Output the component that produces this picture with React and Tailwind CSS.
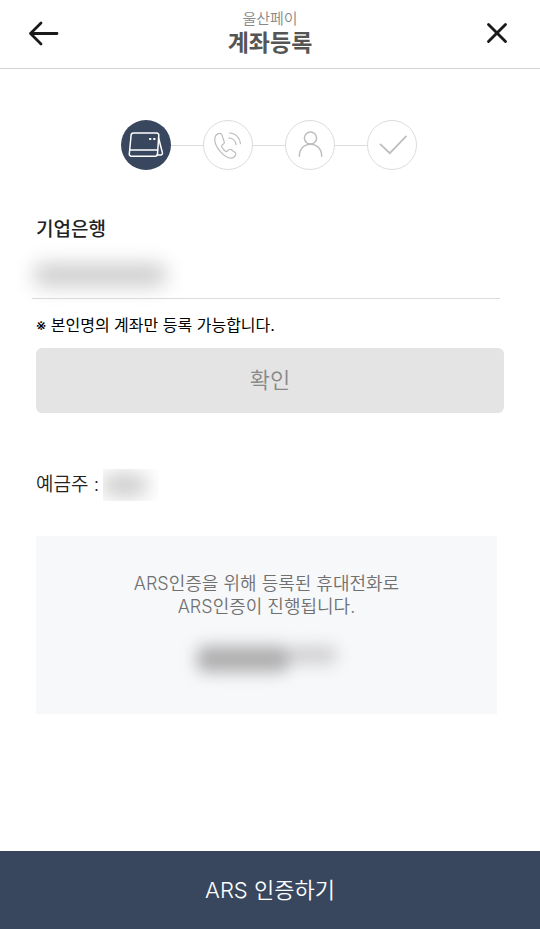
import { X } from "lucide-react";

function CardIcon() {
  return (
    <svg viewBox="0 0 36 28" className="w-9 h-7" fill="none" stroke="currentColor" strokeWidth="1.5" strokeLinecap="round" strokeLinejoin="round">
      <path d="M5.5 2h23.3a2 2 0 0 1 2 2.200l-1.300 18.800a2.400 2.400 0 0 1-2.400 2.200H3.300a2 2 0 0 1-2-2.200L3.100 4.200A2.400 2.400 0 0 1 5.500 2Z" />
      <path d="M1.800 19h27.800" />
      <path d="M30.600 7l3.800 14.800a1.700 1.700 0 0 1-1.600 2.200h-4" />
      <path d="M21.900 7.900h.6M26 7.900h.6" strokeWidth="2" />
    </svg>
  );
}

function CallIcon() {
  return (
    <svg viewBox="0 0 30 30" className="w-[30px] h-[30px]" fill="none" stroke="currentColor" strokeWidth="1.2" strokeLinecap="round" strokeLinejoin="round">
      <path d="M6.200 3.400c-2.200.6-4.200 2.700-4.400 5.400-.3 4 2.200 9 5.600 12.800 3.200 3.600 7.200 6.400 10.600 6.600 2.200.1 3.900-1.600 4.700-3.400.4-1 .1-1.700-.6-2.200l-4.100-3c-.8-.5-1.600-.4-2.300.2l-1.300 1.300c-.6.6-1.400.5-2.100 0-1.500-1.100-2.600-2.500-3.500-4.100-.4-.8-.3-1.500.4-2l1.500-1.200c.7-.6.9-1.300.5-2.100L8.800 4.600c-.5-1-1.400-1.500-2.600-1.200Z" />
      <path d="M16.500 3c5.800.1 10.600 4.800 11 10.600" />
      <path d="M15.900 7.800c3.800.3 6.800 3.200 7.200 7" />
    </svg>
  );
}

function PersonIcon() {
  return (
    <svg viewBox="0 0 30 30" className="w-[30px] h-[30px]" fill="none" stroke="currentColor" strokeWidth="1.5" strokeLinecap="round">
      <circle cx="15.500" cy="8" r="6.100" />
      <path d="M4.300 26.200c0-7 4.700-12 11.200-12s11.200 5 11.200 12" />
    </svg>
  );
}

function CheckIcon() {
  return (
    <svg viewBox="0 0 30 30" className="w-[30px] h-[30px]" fill="none" stroke="currentColor" strokeWidth="1.7" strokeLinecap="round">
      <path d="M3.500 14.400l9.300 8.800L29 6.400" />
    </svg>
  );
}

const STEPS = [
  { label: "계좌", icon: CardIcon, active: true },
  { label: "전화", icon: CallIcon },
  { label: "본인", icon: PersonIcon },
  { label: "완료", icon: CheckIcon },
];

export default function App() {
  return (
    <div className="min-h-screen flex flex-col bg-white font-['Inter','Noto_Sans_CJK_KR',sans-serif] font-[350] text-[#222]">
      {/* Header */}
      <header className="flex items-center justify-between h-[69px] px-[26px] pb-0.5 border-b border-[#d2d2d2]">
        <button type="button" aria-label="뒤로" className="text-[#1a1a1a]">
          <svg viewBox="0 0 34 34" className="w-[34px] h-[34px]" fill="none" stroke="currentColor" strokeWidth="2.800" strokeLinecap="round" strokeLinejoin="round">
            <path d="M31 17.500H4.500M15 7L4.500 17.500 15 28" />
          </svg>
        </button>
        <div className="text-center">
          <p className="text-[15px] leading-5 text-[#888]">울산페이</p>
          <h1 className="text-[23px] leading-7 font-bold text-[#555]">계좌등록</h1>
        </div>
        <button type="button" aria-label="닫기" className="text-[#1a1a1a]">
          <X size={34} strokeWidth={2} absoluteStrokeWidth={false} />
        </button>
      </header>

      <main className="flex-1 px-9 pt-[51px] pb-10">
        {/* Steps */}
        <ol className="flex items-center justify-center pr-0.5">
          {STEPS.map((s, i) => (
            <li key={s.label} aria-label={s.label} className="flex items-center">
              {i > 0 && <span className="w-8 h-px bg-[#dcdcdc]" />}
              <span className={`flex items-center justify-center w-[50px] h-[50px] rounded-full ${
                s.active ? "bg-[#38475e] text-white" : "border border-[#dcdcdc] text-[#bdbdbd]"
              }`}>
                <s.icon />
              </span>
            </li>
          ))}
        </ol>

        {/* Account number */}
        <label htmlFor="account" className="block mt-[46px] text-[19px] leading-7 font-medium">기업은행</label>
        <div className="relative -ml-1 mr-1 border-b border-[#dcdcdc]">
          <input id="account" type="text" readOnly className="block w-full h-[54px] bg-transparent outline-none" />
          <span className="absolute left-0.5 top-5 w-[132px] h-[22px] rounded-lg bg-[#cbcbcb] blur-[10px]" />
        </div>
        <p className="mt-[14px] text-base leading-6 font-normal text-black">※ 본인명의 계좌만 등록 가능합니다.</p>
        <button type="button" className="block w-full h-[65px] mt-[11px] rounded-md bg-[#e4e4e4] text-[22px] text-[#888]">
          확인
        </button>

        {/* Account holder */}
        <p className="flex items-center mt-[58px] text-[19px] leading-7">
          예금주 :
          <span className="flex items-center w-14 h-8 ml-1 -my-0.5 overflow-hidden">
            <span className="w-11 h-5 rounded-lg bg-[#c4c4c4] blur-[10px]" />
          </span>
        </p>

        {/* ARS notice */}
        <section className="mt-[37px] mr-[7px] pt-9 pb-10 bg-[#f7f8fa] text-center text-[18px] leading-[23px] text-[#707070]">
          <p>ARS인증을 위해 등록된 휴대전화로</p>
          <p>ARS인증이 진행됩니다.</p>
          <div className="flex justify-center mt-7 h-7 blur-[8px]">
            <span className="w-[92px] h-[26px] rounded-lg bg-[#aeaeaf]" />
            <span className="w-12 h-[18px] rounded-lg bg-[#cfcfd1]" />
          </div>
        </section>
      </main>

      <button type="button" className="w-full h-[78px] bg-[#38475e] text-[22px] text-white">
        ARS 인증하기
      </button>
    </div>
  );
}
